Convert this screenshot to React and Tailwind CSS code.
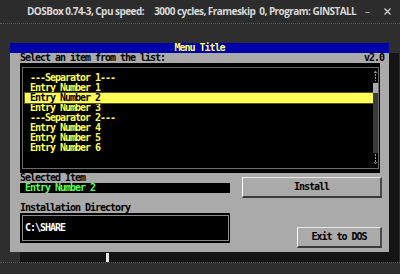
const dos = "font-['DejaVu_Sans_Mono','Liberation_Mono',monospace] text-[10px] leading-[10px] font-bold tracking-[-1.02px] whitespace-pre";

const items = [
  { label: '---Separator 1---' },
  { label: 'Entry Number 1' },
  { label: 'Entry Number 2', selected: true },
  { label: 'Entry Number 3' },
  { label: '---Separator 2---' },
  { label: 'Entry Number 4' },
  { label: 'Entry Number 5' },
  { label: 'Entry Number 6' },
];

function TitleBar() {
  return (
    <div className="h-[23px] shrink-0 rounded-t-[6px] bg-[#2c2c2c] flex items-center relative font-['Open_Sans','Noto_Sans',sans-serif] text-[10px] font-bold text-[#d8d8d8]">
      <div className="pl-[27px] whitespace-pre tracking-[-0.55px]">
        DOSBox 0.74-3, Cpu speed:     3000 cycles, Frameskip  0, Program: GINSTALL
      </div>
      <div className="absolute right-[30px] top-[4px] text-[#bdbdbd] font-normal">–</div>
      <svg className="absolute right-[9px] top-[8px]" width="7" height="7" viewBox="0 0 7 7">
        <path d="M0.5 0.5 L6.5 6.5 M6.5 0.5 L0.5 6.5" stroke="#cfcfcf" strokeWidth="1.3" />
      </svg>
    </div>
  );
}

function ScrollBar() {
  return (
    <div className="w-[5px] flex flex-col">
      <div className="h-[15px] flex justify-center pt-[2px]">
        <svg width="5" height="12" viewBox="0 0 5 12">
          <path d="M2.5 1 V11 M1 3 L2.5 1 L4 3" stroke="#9a9a9a" strokeWidth="1" fill="none" strokeDasharray="2 1" />
        </svg>
      </div>
      <div className="h-[10px] bg-[#aaaaaa]" />
      <div className="h-[60px] bg-[#3a3a3a]" />
      <div className="h-[14px] flex justify-center">
        <svg width="5" height="12" viewBox="0 0 5 12">
          <path d="M2.5 1 V11 M1 9 L2.5 11 L4 9" stroke="#9a9a9a" strokeWidth="1" fill="none" strokeDasharray="2 1" />
        </svg>
      </div>
    </div>
  );
}

function ItemList() {
  return (
    <div className="ml-[10px] w-[360px] h-[110px] bg-black pt-[4px] pb-[4px] pl-[2px] pr-[1px]">
      <div className="h-full border border-[#6a6a6a] flex">
        <div className="flex-1 pt-[5px] pl-[2px]">
          {items.map((item) =>
            item.selected ? (
              <div key={item.label} className={`${dos} h-[10px] pl-[5px] bg-[#ffff55] text-black outline outline-1 outline-[#55552a]`}>
                {item.label}
              </div>
            ) : (
              <div key={item.label} className={`${dos} h-[10px] pl-[5px] text-[#ffff55]`}>
                {item.label}
              </div>
            )
          )}
        </div>
        <ScrollBar />
      </div>
    </div>
  );
}

function DosButton({ children, className }) {
  return (
    <div
      className={`${dos} ${className} h-[21px] bg-[#aaaaaa] border-t border-l border-t-[#e6e6e6] border-l-[#ffffff] border-b-2 border-r-2 border-b-[#3a3a3a] border-r-[#4a4a4a] flex items-center justify-center text-black`}
    >
      {children}
    </div>
  );
}

function Dialog() {
  return (
    <div className="w-[379px] h-[209px] bg-[#aaaaaa] shadow-[10px_10px_0_#141414] flex flex-col">
      <div className={`${dos} h-[10px] bg-[#0000aa] text-[#ffff55] text-center`}>Menu Title</div>
      <div className={`${dos} h-[10px] flex justify-between pl-[10px] pr-[5px] text-black`}>
        <span>Select an item from the list:</span>
        <span>v2.0</span>
      </div>
      <ItemList />
      <div className="flex">
        <div className="ml-[10px] w-[210px] flex flex-col">
          <div className={`${dos} h-[10px] text-black`}>Selected Item</div>
          <div className={`${dos} h-[10px] bg-black text-[#55ff55] pl-[5px]`}>Entry Number 2</div>
          <div className={`${dos} h-[10px] mt-[10px] text-black`}>Installation Directory</div>
          <div className="h-[30px] bg-black p-[2px] pr-[1px]">
            <div className="h-full border border-[#8a8a8a] flex items-center pl-[2px]">
              <span className={`${dos} text-white`}>C:\SHARE</span>
            </div>
          </div>
        </div>
        <div className="ml-[12px] w-[140px] flex flex-col items-end">
          <DosButton className="mt-[4px] w-[140px]">Install</DosButton>
          <DosButton className="mt-[29px] w-[85px]">Exit to DOS</DosButton>
        </div>
      </div>
    </div>
  );
}

export default function App() {
  return (
    <div className="w-[400px] h-[274px] bg-[#2e2e2e] overflow-hidden flex flex-col">
      <TitleBar />
      <div className="flex-1 border-t border-dotted border-[#5a5a5a] relative">
        <div className="pl-[10px] pt-[19px]">
          <Dialog />
        </div>
        <div className="mt-[10px] border-t border-dotted border-[#555555]" />
        {/* text cursor */}
        <div className="absolute left-[106px] top-[229px] w-[3px] h-[9px] bg-[#e8e8e8]" />
      </div>
    </div>
  );
}
